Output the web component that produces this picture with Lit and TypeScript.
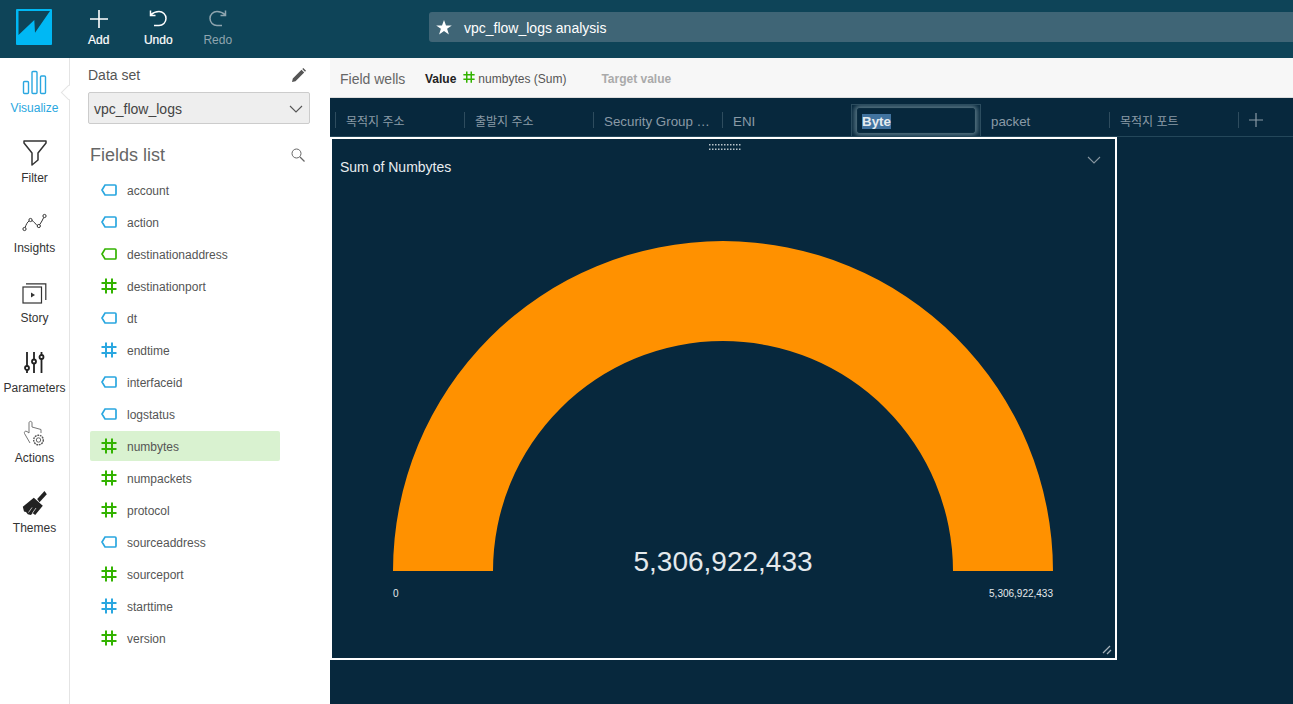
import { LitElement, css, html, svg } from 'lit'
import { customElement } from 'lit/decorators.js'

const BLUE = '#2aa7e0'
const GREEN = '#33b300'

const FIELDS: [string, 'tag' | 'num', string][] = [
  ['account', 'tag', BLUE],
  ['action', 'tag', BLUE],
  ['destinationaddress', 'tag', GREEN],
  ['destinationport', 'num', GREEN],
  ['dt', 'tag', BLUE],
  ['endtime', 'num', BLUE],
  ['interfaceid', 'tag', BLUE],
  ['logstatus', 'tag', BLUE],
  ['numbytes', 'num', GREEN],
  ['numpackets', 'num', GREEN],
  ['protocol', 'num', GREEN],
  ['sourceaddress', 'tag', BLUE],
  ['sourceport', 'num', GREEN],
  ['starttime', 'num', BLUE],
  ['version', 'num', GREEN],
]

const TABS = ['목적지 주소', '출발지 주소', 'Security Group …', 'ENI', 'Byte', 'packet', '목적지 포트']

const tagIcon = (c: string) => html`<svg width="16" height="12" viewBox="0 0 16 12"><path d="M4 1H14a1 1 0 0 1 1 1v8a1 1 0 0 1-1 1H4L1 6z" fill="none" stroke=${c} stroke-width="1.700"/></svg>`
const numIcon = (c: string, s = 16) => html`<svg width=${s} height=${s} viewBox="0 0 16 16"><path d="M5 .5V15.5M11 .5V15.5M.5 5H15.500M.5 11H15.500" fill="none" stroke=${c} stroke-width="2"/></svg>`

const RAIL: [string, unknown][] = [
  ['Visualize', svg`<g fill="none" stroke="#2aa7e0" stroke-width="1.400"><rect x="6.500" y="11.500" width="5" height="12" rx="1"/><rect x="15" y="1.500" width="5" height="22" rx="1"/><rect x="23.500" y="6" width="5" height="17.500" rx="1"/></g>`],
  ['Filter', svg`<path d="M7 1H29V3L21 13V20L15 25V13L7 3Z" fill="none" stroke="#333" stroke-width="1.500" stroke-linejoin="round"/>`],
  ['Insights', svg`<g fill="none" stroke="#333" stroke-width="1"><circle cx="7.500" cy="19" r="1.600"/><circle cx="13.500" cy="10" r="1.600"/><circle cx="21.800" cy="16" r="1.600"/><circle cx="27.500" cy="6" r="1.600"/><path d="M8.200 17.500C9 14.500 10.500 12 12 11M15 10.500C17 11.500 18.500 14 20.200 15.500M22.800 14.500C24.500 12.500 25.500 9.500 26.700 7.500"/></g>`],
  ['Story', svg`<g fill="none" stroke="#333" stroke-width="1.200"><rect x="6" y="7" width="18.500" height="16"/><path d="M9 3.800H28.800V20"/></g><path d="M14 12.500L18 15L14 17.500Z" fill="#333"/>`],
  ['Parameters', svg`<g fill="none" stroke="#222" stroke-width="1.800"><path d="M10 2V16M10 20V23M17 2V9.500M17 13.500V23M24.500 2V5M24.500 9V23"/><circle cx="10" cy="18" r="2"/><circle cx="17" cy="11.500" r="2"/><circle cx="24.500" cy="7" r="2"/></g>`],
  ['Actions', svg`<g fill="none" stroke="#666" stroke-width=".9"><path d="M12 13V3C12 .8 15 .8 15 3V7L24 9.500V13M12 13L10 11.500C8 10.500 7 12 7.500 13.500L13 23"/><circle cx="21.500" cy="20" r="4.800" fill="#fff" stroke="#555" stroke-dasharray="1.800 .8" stroke-width="1.400"/><circle cx="21.500" cy="20" r="2.200" stroke="#555"/></g>`],
  ['Themes', svg`<path d="M27.500 1L29.800 4.300L22.500 12.300L20.200 9Z" fill="#222"/><path d="M16.800 7.700L25.800 15.700L18.200 25L15.500 23L14 25L10.800 24.300L9 22L7 21.500L5.800 16.700Z" fill="#222"/><path d="M11.500 22.500L15 17.500M15.500 23L19 18" stroke="#fff" stroke-width=".7"/>`],
]

@customElement('app-root')
export class AppRoot extends LitElement {
  static styles = css`
    :host {
      display: flex;
      flex-direction: column;
      width: 1293px;
      height: 704px;
      overflow: hidden;
      font-family: "Liberation Sans", "Noto Sans CJK KR", sans-serif;
    }
    .top {
      flex: 0 0 58px;
      display: flex;
      align-items: flex-start;
      background: #0e4458;
    }
    .logo { margin: 9px 0 0 16px; width: 36px; height: 36px; flex: none; }
    .tools { display: flex; margin-left: 17px; }
    .tool {
      width: 59.500px;
      display: flex;
      flex-direction: column;
      align-items: center;
      color: #fff;
      font-size: 12px;
      padding-top: 10px;
      -webkit-text-stroke: 0.2px;
    }
    .tool svg { display: block; margin-bottom: 5px; }
    .tool.off { color: #8fa5af; -webkit-text-stroke: 0; }
    .title {
      margin: 12px 0 0 181.500px;
      flex: 1;
      height: 30px;
      box-sizing: border-box;
      display: flex;
      align-items: center;
      gap: 12px;
      padding: 1px 0 0 7px;
      background: #3f6576;
      border-radius: 3px 0 0 3px;
      color: #fff;
      font-size: 14px;
    }
    .body { flex: 1; display: flex; min-height: 0; }
    .rail {
      flex: 0 0 69px;
      padding-top: 12px;
      background: #fff;
      border-right: 1px solid #e4e4e4;
      position: relative;
    }
    .notch {
      position: absolute;
      left: 63px;
      top: 29px;
      width: 10px;
      height: 10px;
      background: #fff;
      border-left: 1px solid #e4e4e4;
      border-bottom: 1px solid #e4e4e4;
      transform: rotate(45deg);
    }
    .nav {
      height: 70px;
      display: flex;
      flex-direction: column;
      align-items: center;
      font-size: 12px;
      color: #333;
    }
    .nav svg { display: block; }
    .nav span { line-height: 14px; padding-top: 2px; }
    .nav.on { color: #2aa7e0; }
    .panel {
      flex: 0 0 260px;
      background: #fff;
      padding: 0 20px 0 18px;
      box-sizing: border-box;
    }
    .ds {
      height: 34px;
      display: flex;
      align-items: center;
      justify-content: space-between;
      font-size: 14px;
      color: #555;
      padding-right: 4px;
    }
    .select {
      height: 29px;
      border: 1px solid #ccc;
      border-radius: 2px;
      background: #eee;
      display: flex;
      align-items: center;
      justify-content: space-between;
      padding: 1px 6px 0 5px;
      font-size: 14px;
      color: #444;
    }
    .fl {
      margin-top: 15px;
      height: 32px;
      display: flex;
      align-items: center;
      justify-content: space-between;
      padding: 0 5px 0 2px;
      font-size: 18px;
      color: #666;
    }
    .fields { margin: 4px 30px 0 2px; }
    .field {
      height: 30px;
      margin-bottom: 2px;
      display: flex;
      align-items: center;
      gap: 10px;
      padding-left: 11px;
      font-size: 12px;
      color: #555;
      border-radius: 2px;
    }
    .field svg { display: block; }
    .field span { padding-top: 2px; }
    .field.sel { background: #d9f2d0; }
    .main { flex: 1; display: flex; flex-direction: column; background: #07283d; min-width: 0; }
    .wells {
      flex: 0 0 40px;
      box-sizing: border-box;
      display: flex;
      align-items: center;
      background: #f7f7f7;
      border-bottom: 1px solid #ddd;
      padding: 2px 0 0 10px;
      font-size: 12px;
      color: #555;
    }
    .wells .h { font-size: 14px; color: #666; width: 85px; }
    .wells b { color: #222; margin-right: 7px; }
    .wells svg { margin: -3px 3px 0 0; }
    .wells .tv { color: #aaa; font-weight: bold; margin-left: 35px; }
    .tabs {
      flex: 0 0 39px;
      box-sizing: border-box;
      display: flex;
      padding-left: 5px;
      border-bottom: 1px solid #24475a;
    }
    .tab {
      width: 129px;
      height: 38px;
      box-sizing: border-box;
      padding: 15px 0 0 11px;
      font-size: 13.330px;
      line-height: 18px;
      color: #8a9aa6;
      white-space: nowrap;
      position: relative;
    }
    .tab.ko { font-size: 12px; }
    .tab::before {
      content: '';
      position: absolute;
      left: 0;
      top: 14px;
      height: 16px;
      width: 1px;
      background: #2e4c5e;
    }
    .tab.plain::before { display: none; }
    .tab.edit {
      margin-top: 6px;
      height: 32px;
      width: 130px;
      margin-right: -1px;
      padding: 3px 5px 0 5px;
      border: 1px solid #2c4d5f;
      border-bottom: 0;
      overflow: hidden;
    }
    .tab.edit::before { display: none; }
    .input {
      height: 25px;
      box-sizing: border-box;
      border: 1px solid #0b2c40;
      box-shadow: 0 0 4px 3px #4f6d7c;
      border-radius: 3px;
      padding: 5px 0 0 4px;
      color: #e6ecef;
      font-weight: bold;
      line-height: 15px;
    }
    .input span { background: #41739f; display: inline-block; }
    .addtab { width: 55px; height: 38px; position: relative; padding: 15px 0 0 11px; box-sizing: border-box; }
    .addtab::before {
      content: '';
      position: absolute;
      left: 0;
      top: 14px;
      height: 16px;
      width: 1px;
      background: #2e4c5e;
    }
    .addtab svg { display: block; }
    .card {
      width: 787px;
      height: 523px;
      box-sizing: border-box;
      border: 2px solid #fff;
      position: relative;
      color: #fff;
    }
    .card-title { position: relative; font-size: 14px; padding: 20px 0 0 8px; line-height: 16px; color: #e8edf0; }
    .grip { position: absolute; left: 377px; top: 5px; }
    .menu { position: absolute; right: 14px; top: 17px; }
    .resize { position: absolute; right: 3px; bottom: 3px; }
    .gauge { display: block; position: absolute; left: 0; top: 0; }
    .gauge text { font-family: "Liberation Sans", sans-serif; fill: #e4e9ec; }
  `

  render() {
    return html`
      <div class="top">
        <svg class="logo" viewBox="0 0 36 36">
          <rect width="36" height="36" rx="1" fill="#00b8f4"/>
          <path d="M2.500 2H34L19 23.700L18.300 11L2.500 26Z" fill="#0e4458"/>
        </svg>
        <div class="tools">
          <div class="tool">
            <svg width="18" height="18" viewBox="0 0 18 18"><path d="M9 0V18M0 9H18" stroke="#fff" stroke-width="1.600"/></svg>
            Add
          </div>
          <div class="tool">
            <svg width="20" height="18" viewBox="0 0 20 18"><path d="M2.500 5C5 2.800 8 1.500 11 1.500A7 7 0 0 1 11 15.500H6M2.500 .5V5.500H7.500" fill="none" stroke="#fff" stroke-width="1.500"/></svg>
            Undo
          </div>
          <div class="tool off">
            <svg width="20" height="18" viewBox="0 0 20 18"><path d="M17.500 5C15 2.800 12 1.500 9 1.500A7 7 0 0 0 9 15.500H14M17.500 .5V5.500H12.500" fill="none" stroke="#8fa5af" stroke-width="1.500"/></svg>
            Redo
          </div>
        </div>
        <div class="title">
          <svg width="16" height="15" viewBox="0 0 16 15"><path d="M8 0L10 5.400H15.800L11.100 8.800L12.900 14.500L8 11L3.100 14.500L4.900 8.800L.2 5.400H6Z" fill="#fff"/></svg>
          vpc_flow_logs analysis
        </div>
      </div>
      <div class="body">
        <div class="rail">
          <div class="notch"></div>
          ${RAIL.map(([label, icon], i) => html`
            <div class="nav ${i === 0 ? 'on' : ''}">
              <svg width="36" height="29" viewBox="0 0 36 29">${icon}</svg>
              <span>${label}</span>
            </div>`)}
        </div>
        <div class="panel">
          <div class="ds">
            Data set
            <svg width="14" height="14" viewBox="0 0 14 14"><path d="M0 14L.8 10.500L9.500 1.800L12.200 4.500L3.500 13.200ZM10.300 1L11.300 0L14 2.700L13 3.700Z" fill="#555"/></svg>
          </div>
          <div class="select">
            vpc_flow_logs
            <svg width="14" height="8" viewBox="0 0 14 8"><path d="M1 1L7 7L13 1" fill="none" stroke="#555" stroke-width="1.100"/></svg>
          </div>
          <div class="fl">
            Fields list
            <svg width="14" height="14" viewBox="0 0 14 14"><circle cx="5.500" cy="5.500" r="4.500" fill="none" stroke="#666" stroke-width="1"/><path d="M9 9L13.500 13.500" stroke="#666" stroke-width="1.300"/></svg>
          </div>
          <div class="fields">
            ${FIELDS.map(([name, kind, c]) => html`
              <div class="field ${name === 'numbytes' ? 'sel' : ''}">
                ${kind === 'tag' ? tagIcon(c) : numIcon(c)}
                <span>${name}</span>
              </div>`)}
          </div>
        </div>
        <div class="main">
          <div class="wells">
            <span class="h">Field wells</span>
            <b>Value</b>
            ${numIcon(GREEN, 12)}
            <span>numbytes (Sum)</span>
            <span class="tv">Target value</span>
          </div>
          <div class="tabs">
            ${TABS.map((t, i) => t === 'Byte'
              ? html`<div class="tab edit"><div class="input"><span>Byte</span></div></div>`
              : html`<div class="tab ${i === 5 ? 'plain' : ''} ${/[가-힣]/.test(t) ? 'ko' : ''}">${t}</div>`)}
            <div class="addtab">
              <svg width="14" height="14" viewBox="0 0 14 14"><path d="M7 0V14M0 7H14" stroke="#8a9aa6" stroke-width="1.200"/></svg>
            </div>
          </div>
          <div class="card">
            <svg class="gauge" width="783" height="519" viewBox="0 0 783 519">
              <path d="M61 432A330 330 0 0 1 721 432H621A230 230 0 0 0 161 432Z" fill="#ff9100"/>
              <text x="391" y="432" font-size="28" text-anchor="middle">5,306,922,433</text>
              <text x="61" y="458" font-size="10">0</text>
              <text x="721" y="458" font-size="10" text-anchor="end">5,306,922,433</text>
            </svg>
            <div class="card-title">Sum of Numbytes</div>
            <svg class="grip" width="32" height="8" viewBox="0 0 32 8">
              ${[0, 1].map(r => [0, 1, 2, 3, 4, 5, 6, 7, 8, 9, 10].map(c => svg`<rect x=${c * 3} y=${r * 4.5} width="1.500" height="1.500" fill="#b9c4cb"/>`))}
            </svg>
            <svg class="menu" width="14" height="8" viewBox="0 0 14 8"><path d="M1 1L7 7L13 1" fill="none" stroke="#8796a0" stroke-width="1.100"/></svg>
            <svg class="resize" width="10" height="10" viewBox="0 0 10 10"><path d="M1 8L8 1M5 9L9 5" stroke="#a5b1b9" stroke-width="1.300"/></svg>
          </div>
        </div>
      </div>
    `
  }
}
